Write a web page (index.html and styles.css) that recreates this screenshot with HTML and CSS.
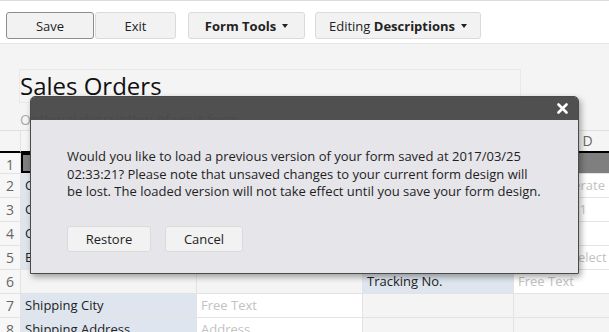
FILE: index.html
```html
<!DOCTYPE html>
<html lang="en">
<head>
  <meta charset="UTF-8" />
  <title>Sales Orders</title>
  <link rel="stylesheet" href="styles.css">
</head>
<body>
  <div class="toolbar">
    <button class="btn btn-save">Save</button>
    <button class="btn btn-exit">Exit</button>
    <button class="btn btn-tools"><b>Form Tools</b><span class="caret"></span></button>
    <button class="btn btn-mode"><span>Editing <b>Descriptions</b></span><span class="caret"></span></button>
  </div>

  <div class="form-head">
    <div class="form-title">Sales Orders</div>
    <div class="form-desc">Optional description of your form</div>
  </div>

  <div class="sheet">
    <div class="row head">
      <div class="num"></div><div>A</div><div>B</div><div>C</div><div>D</div><div></div>
    </div>
    <div class="row first sel">
      <div class="num">1</div><div class="a1"></div><div></div><div></div><div></div><div></div>
    </div>
    <div class="row">
      <div class="num">2</div><div class="lbl">Customer Name</div><div class="inp"></div><div class="lbl"></div><div class="inp">Auto-generate</div><div></div>
    </div>
    <div class="row">
      <div class="num">3</div><div class="lbl">Customer Phone</div><div class="inp"></div><div class="lbl"></div><div class="inp">2017/03/21</div><div></div>
    </div>
    <div class="row">
      <div class="num">4</div><div class="lbl">Contact Email</div><div class="inp"></div><div class="lbl"></div><div class="inp"></div><div></div>
    </div>
    <div class="row">
      <div class="num">5</div><div class="lbl">Expected Delivery</div><div class="inp"></div><div class="lbl"></div><div class="inp">Multiple Select</div><div></div>
    </div>
    <div class="row">
      <div class="num">6</div><div class="empty"></div><div class="empty"></div><div class="lbl">Tracking No.</div><div class="inp">Free Text</div><div></div>
    </div>
    <div class="row">
      <div class="num">7</div><div class="lbl">Shipping City</div><div class="inp">Free Text</div><div class="empty"></div><div class="empty"></div><div></div>
    </div>
    <div class="row">
      <div class="num">8</div><div class="lbl">Shipping Address</div><div class="inp">Address</div><div class="empty"></div><div class="empty"></div><div></div>
    </div>
  </div>

  <!-- restore dialog -->
  <div class="modal">
    <div class="modal-head">
      <svg class="close" width="11" height="11" viewBox="0 0 11 11">
        <path d="M1.5 1.5 L9.5 9.5 M9.5 1.5 L1.5 9.5" stroke="#fff" stroke-width="2.6" stroke-linecap="round"/>
      </svg>
    </div>
    <div class="modal-body">
      <p class="modal-text">Would you like to load a previous version of your form saved at 2017/03/25 02:33:21? Please note that unsaved changes to your current form design will be lost. The loaded version will not take effect until you save your form design.</p>
      <div class="modal-actions">
        <button class="btn btn-restore">Restore</button>
        <button class="btn btn-cancel">Cancel</button>
      </div>
    </div>
  </div>
</body>
</html>
```

FILE: styles.css
```css
/* Reset */
* { margin: 0; padding: 0; box-sizing: border-box; }

body {
  font-family: 'Open Sans', sans-serif;
  font-size: 13px;
  color: #222;
  background: #fff;
  width: 609px;
  height: 332px;
  overflow: hidden;
  position: relative;
}

/* top toolbar */
.toolbar {
  display: flex;
  height: 44px;
  padding: 11px 6px 0;
  border-top: 1px solid #dcdcdc;
  border-bottom: 1px solid #e6e6e6;
}
.btn {
  font: inherit;
  color: #222;
  height: 27px;
  background: #f2f2f2;
  border: 1px solid #dadada;
  border-radius: 3px;
  display: flex;
  align-items: center;
  justify-content: center;
  gap: 6px;
}
.btn-save  { width: 88px; border-color: #8c8c8c; }
.btn-exit  { width: 81px; margin-left: 1px; }
.btn-tools { width: 117px; margin-left: 12px; }
.btn-mode  { width: 166px; margin-left: 10px; }
.caret {
  width: 0;
  border-left: 3.5px solid transparent;
  border-right: 3.5px solid transparent;
  border-top: 4px solid #222;
}

/* form title block */
.form-head {
  background: #f4f4f4;
  height: 86px;
  padding: 25px 0 0 19px;
}
.form-title {
  width: 502px;
  height: 34px;
  border: 1px solid #e8e8e8;
  font-size: 24px;
  line-height: 32px;
  color: #111;
}
.form-desc {
  margin-top: 7px;
  font-size: 14px;
  line-height: 20px;
  color: #a9a9a9;
  padding-left: 1px;
}

/* spreadsheet */
.sheet { border-top: 1px solid #e0e0e0; }
.row {
  display: grid;
  grid-template-columns: 21px 176px 166px 151px 148px 200px;
  height: 24px;
}
.row > div {
  border-right: 1px solid #e3e3e3;
  border-bottom: 1px solid #e3e3e3;
  padding: 0 4px;
  line-height: 23px;
  white-space: nowrap;
  overflow: hidden;
}
.row.head { height: 22px; }
.row.head > div {
  border-bottom: 2px solid #000;
  background: #f5f5f5;
  text-align: center;
  color: #666;
  font-size: 14px;
  line-height: 20px;
}
.row.first { height: 21px; }
.row > .num {
  padding: 0;
  text-align: center;
  color: #666;
  font-size: 14px;
  background: #f7f7f7;
}
.row.sel > div:not(.num) { background: #7f7f7f; }
.row.sel > .a1 { box-shadow: inset 0 0 0 2px #000; }
.row > .lbl   { background: #dfe5ee; }
.row > .inp   { background: #fff; color: #c2c2c2; }
.row > .empty { background: #f4f4f4; }

/* dialog */
.modal {
  position: absolute;
  left: 30px;
  top: 96px;
  width: 549px;
  height: 178px;
  border: 1px solid #4a4a4a;
  border-radius: 5px 5px 0 0;
  box-shadow: 2px 3px 6px rgba(0, 0, 0, 0.35);
  display: flex;
  flex-direction: column;
}
.modal-head {
  height: 23px;
  background: rgba(67, 67, 67, 0.93);
  border-radius: 4px 4px 0 0;
  display: flex;
  justify-content: flex-end;
  align-items: center;
  padding-right: 10px;
}
.modal-body {
  flex: 1;
  background: #e6e5ea;
  padding: 28px 36px 0;
}
.modal-text {
  font-size: 13px;
  line-height: 17.5px;
  color: #1e1e1e;
}
.modal-actions {
  display: flex;
  gap: 14px;
  margin-top: 25px;
}
.btn-restore { width: 84px; height: 26px; }
.btn-cancel  { width: 78px; height: 26px; }
```
